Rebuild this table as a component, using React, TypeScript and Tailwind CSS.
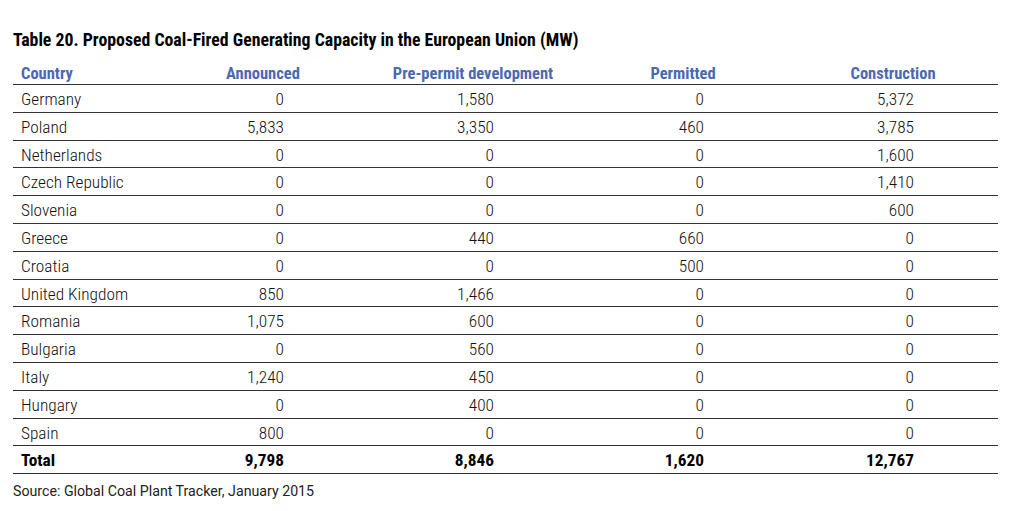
const rows = [
  ["Germany", "0", "1,580", "0", "5,372"],
  ["Poland", "5,833", "3,350", "460", "3,785"],
  ["Netherlands", "0", "0", "0", "1,600"],
  ["Czech Republic", "0", "0", "0", "1,410"],
  ["Slovenia", "0", "0", "0", "600"],
  ["Greece", "0", "440", "660", "0"],
  ["Croatia", "0", "0", "500", "0"],
  ["United Kingdom", "850", "1,466", "0", "0"],
  ["Romania", "1,075", "600", "0", "0"],
  ["Bulgaria", "0", "560", "0", "0"],
  ["Italy", "1,240", "450", "0", "0"],
  ["Hungary", "0", "400", "0", "0"],
  ["Spain", "800", "0", "0", "0"],
];

const headers = ["Announced", "Pre-permit development", "Permitted", "Construction"];

export default function App() {
  return (
    <div className="w-[1028px] h-[511px] bg-white px-[13px] pt-[30px] font-['Roboto_Condensed',Roboto,sans-serif] [font-stretch:condensed] text-[#1c1c1c]">
      <h1 className="text-[17.8px] leading-[20px] font-bold text-black">
        Table 20. Proposed Coal-Fired Generating Capacity in the European Union (MW)
      </h1>

      <div className="mt-[12px] w-[985px]">
        {/* Header */}
        <div className="flex h-[23px] pt-[1px] border-b border-[#333] text-[16.5px] font-bold text-[#4a69b2] leading-[22px]">
          <div className="w-[145px] pl-[8px]">Country</div>
          {headers.map((h) => (
            <div key={h} className="w-[210px] text-center">
              {h}
            </div>
          ))}
        </div>

        {/* Body */}
        {rows.map((r) => (
          <div key={r[0]} className="flex items-center h-[27.8px] pt-[3px] border-b border-[#333] text-[17.3px] font-light text-[#111]">
            <div className="w-[145px] pl-[8px]">{r[0]}</div>
            {r.slice(1).map((v, i) => (
              <div key={i} className="w-[210px] text-right pr-[84px]">
                {v}
              </div>
            ))}
          </div>
        ))}

        {/* Total */}
        <div className="flex items-center h-[27.8px] pt-[3px] border-b border-[#333] text-[17.3px] font-bold text-black">
          <div className="w-[145px] pl-[8px]">Total</div>
          {["9,798", "8,846", "1,620", "12,767"].map((v) => (
            <div key={v} className="w-[210px] text-right pr-[84px]">
              {v}
            </div>
          ))}
        </div>
      </div>

      <p className="mt-[9px] text-[14.2px] leading-[16px] font-['Roboto',sans-serif] [font-stretch:normal] text-[#222]">
        Source: Global Coal Plant Tracker, January 2015
      </p>
    </div>
  );
}
